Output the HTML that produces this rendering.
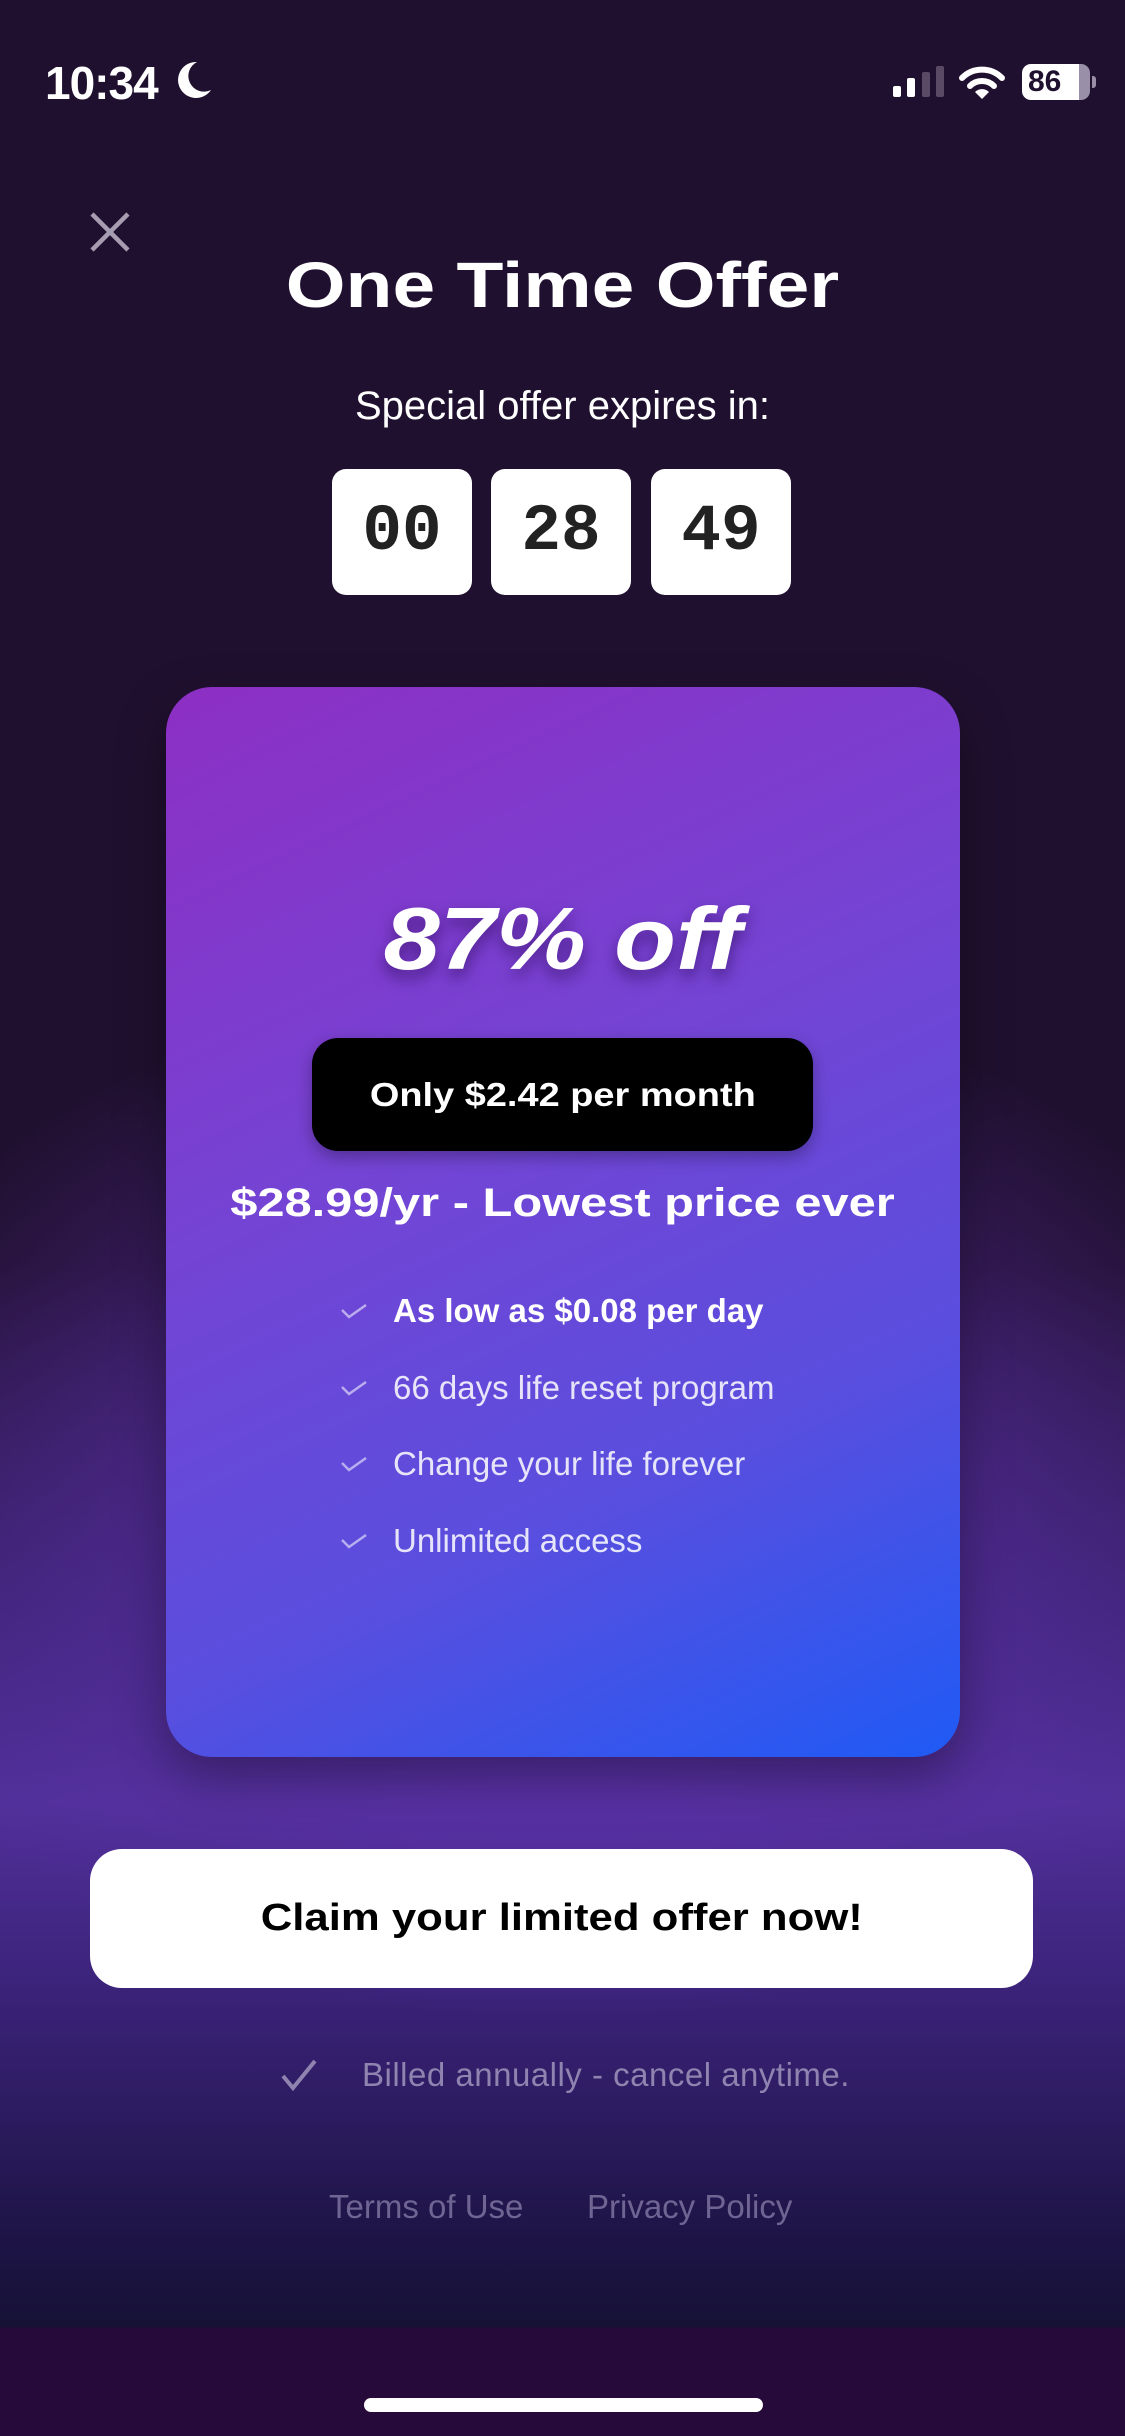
<!DOCTYPE html>
<html><head><meta charset="utf-8"><style>
*{margin:0;padding:0;box-sizing:border-box}
body{width:1125px;height:2436px;overflow:hidden;position:relative;font-family:"Liberation Sans",sans-serif;color:#fff;
background:#20102f;}
.bg{position:absolute;left:0;top:0;width:1125px;height:2436px;
background:
radial-gradient(ellipse 760px 520px at 562px 1500px, rgba(130,70,220,0.85) 0%, rgba(100,50,180,0.5) 45%, rgba(32,16,47,0) 100%),
linear-gradient(180deg,#20102f 0%,#20102f 52%,#3c2474 66%,#51309a 74%,#3a2278 82%,#1d1445 92%,#161236 95.5%,#260a3a 95.6%,#260a3a 100%);}
.bot{position:absolute;left:0;top:2331px;width:1125px;height:105px;background:#260a3a}
.abs{position:absolute}
.c{position:absolute;left:0;width:1125px;text-align:center}
.box{position:absolute;top:469px;width:140px;height:126px;background:#fff;border-radius:14px;color:#222;font-family:"Liberation Mono",monospace;font-weight:bold;font-size:66px;line-height:126px;text-align:center}
.card{position:absolute;left:166px;top:687px;width:794px;height:1070px;border-radius:46px;
background:linear-gradient(155deg,#8d2fc4 0%,#7444d4 40%,#5a4ede 70%,#1f5af5 100%);box-shadow:0 20px 50px rgba(0,0,0,0.35)}
.feat{position:absolute;left:393px;font-size:33px;color:rgba(255,255,255,0.85)}
.chk{position:absolute;left:340px;width:28px;height:16px}
</style></head><body>
<div class="bg"></div><div class="bot"></div>
<div class="abs" style="left:45px;top:56px;font-size:46px;font-weight:bold;letter-spacing:-1px">10:34</div>
<svg class="abs" style="left:175px;top:58px" width="40" height="44" viewBox="0 0 40 44"><path d="M22 4 A18 18 0 1 0 36 32 A14 14 0 0 1 22 4Z" fill="#fff"/></svg>
<div class="abs" style="left:893px;top:86px;width:8px;height:11px;background:#fff;border-radius:2px"></div>
<div class="abs" style="left:907px;top:78px;width:8px;height:19px;background:#fff;border-radius:2px"></div>
<div class="abs" style="left:922px;top:72px;width:8px;height:25px;background:#5a4a66;border-radius:2px"></div>
<div class="abs" style="left:936px;top:66px;width:8px;height:31px;background:#5a4a66;border-radius:2px"></div>
<svg class="abs" style="left:958px;top:66px" width="48" height="34" viewBox="0 0 48 34"><path d="M4 12 A28 28 0 0 1 44 12" stroke="#fff" stroke-width="6" fill="none" stroke-linecap="round"/><path d="M12 20 A17 17 0 0 1 36 20" stroke="#fff" stroke-width="6" fill="none" stroke-linecap="round"/><path d="M17 26 L24 33 L31 26 A10 10 0 0 0 17 26Z" fill="#fff"/></svg>
<div class="abs" style="left:1022px;top:64px;width:68px;height:36px;border-radius:9px;background:linear-gradient(90deg,#fff 84%,#9a8fa8 84%);color:#20102f;font-weight:bold;font-size:30px;line-height:36px;padding-left:6px">86</div>
<div class="abs" style="left:1092px;top:76px;width:4px;height:12px;background:#9a8fa8;border-radius:0 3px 3px 0"></div>
<svg class="abs" style="left:88px;top:210px" width="44" height="44" viewBox="0 0 44 44"><path d="M4 4 L40 40 M40 4 L4 40" stroke="#a79db3" stroke-width="4.5"/></svg>
<div class="c" style="top:248px;font-size:64px;font-weight:bold;letter-spacing:0;transform:scaleX(1.2)">One Time Offer</div>
<div class="c" style="top:384px;font-size:40px">Special offer expires in:</div>
<div class="box" style="left:332px">00</div>
<div class="box" style="left:491px">28</div>
<div class="box" style="left:651px">49</div>
<div class="card"></div>
<div class="c" style="top:888px;font-size:88px;font-weight:bold;font-style:italic;transform:scaleX(1.15);text-shadow:0 8px 14px rgba(40,10,80,0.55)">87% off</div>
<div class="abs" style="left:312px;top:1038px;width:501px;height:113px;background:#000;border-radius:26px;font-size:33px;font-weight:bold;line-height:113px;text-align:center;box-shadow:0 6px 16px rgba(0,0,0,0.3)"><span style="display:inline-block;transform:scaleX(1.15)">Only $2.42 per month</span></div>
<div class="c" style="top:1181px;font-size:40px;font-weight:bold;transform:scaleX(1.22)">$28.99/yr - Lowest price ever</div>
<svg class="chk" style="top:1303px" viewBox="0 0 28 16"><path d="M2 7 L9 14 L26 2" stroke="rgba(255,255,255,0.55)" stroke-width="2.5" fill="none"/></svg>
<div class="feat" style="top:1292px;font-weight:bold;color:#fff">As low as $0.08 per day</div>
<svg class="chk" style="top:1380px" viewBox="0 0 28 16"><path d="M2 7 L9 14 L26 2" stroke="rgba(255,255,255,0.55)" stroke-width="2.5" fill="none"/></svg>
<div class="feat" style="top:1369px">66 days life reset program</div>
<svg class="chk" style="top:1456px" viewBox="0 0 28 16"><path d="M2 7 L9 14 L26 2" stroke="rgba(255,255,255,0.55)" stroke-width="2.5" fill="none"/></svg>
<div class="feat" style="top:1445px">Change your life forever</div>
<svg class="chk" style="top:1533px" viewBox="0 0 28 16"><path d="M2 7 L9 14 L26 2" stroke="rgba(255,255,255,0.55)" stroke-width="2.5" fill="none"/></svg>
<div class="feat" style="top:1522px">Unlimited access</div>
<div class="abs" style="left:90px;top:1849px;width:943px;height:139px;background:#fff;border-radius:32px;color:#000;font-size:38px;font-weight:bold;line-height:139px;text-align:center"><span style="display:inline-block;transform:scaleX(1.15)">Claim your limited offer now!</span></div>
<svg class="abs" style="left:280px;top:2058px" width="38" height="34" viewBox="0 0 38 34"><path d="M3 18 L13 30 L35 3" stroke="#8f83b0" stroke-width="4" fill="none"/></svg>
<div class="abs" style="left:362px;top:2056px;font-size:33px;color:#8f83b0;letter-spacing:0.5px">Billed annually - cancel anytime.</div>
<div class="abs" style="left:329px;top:2188px;font-size:33px;color:#6e6593">Terms of Use</div>
<div class="abs" style="left:587px;top:2188px;font-size:33px;color:#6e6593">Privacy Policy</div>
<div class="abs" style="left:364px;top:2398px;width:399px;height:14px;background:#fff;border-radius:7px"></div>
</body></html>
